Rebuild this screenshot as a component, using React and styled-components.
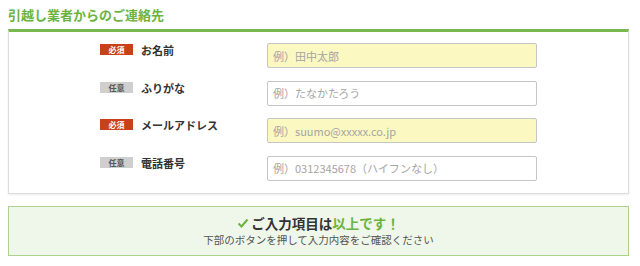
import React from "react";
import styled, { createGlobalStyle } from "styled-components";

const GlobalStyle = createGlobalStyle`
  body {
    margin: 0;
    background: #fff;
    font-family: "Noto Sans CJK JP", "Noto Sans", sans-serif;
    color: #333;
  }
`;

const Page = styled.div`
  padding: 6px 11px 0 8px;
`;

const Title = styled.h2`
  margin: 0 0 5px;
  font-size: 13px;
  line-height: 18px;
  font-weight: 700;
  color: #6cb33e;
`;

const FormBox = styled.div`
  border: 1px solid #ddd;
  border-top: 3px solid #79b74f;
  box-shadow: 0 1px 2px rgba(0, 0, 0, 0.08);
  padding: 11px 0 12px 91px;
  display: flex;
  flex-direction: column;
  gap: 12.5px;
`;

const Row = styled.div`
  display: flex;
  align-items: flex-start;
  height: 25px;
`;

const Badge = styled.span`
  width: 33px;
  height: 11px;
  margin-top: 1px;
  display: flex;
  align-items: center;
  justify-content: center;
  font-size: 8px;
  line-height: 11px;
  font-weight: 700;
  color: ${(p) => (p.required ? "#fff" : "#555")};
  background: ${(p) => (p.required ? "#c9411b" : "#cfcfcf")};
`;

const Label = styled.span`
  width: 126px;
  padding-left: 8px;
  font-size: 11px;
  font-weight: 700;
  line-height: 14px;
  color: #333;
`;

const Input = styled.input`
  box-sizing: border-box;
  width: 270px;
  height: 25px;
  padding: 0 5px;
  border: 1px solid #c6c6c6;
  border-radius: 2px;
  background: ${(p) => (p.required ? "#fcf8c1" : "#fff")};
  font-family: "Noto Sans CJK JP", "Noto Sans", sans-serif;
  font-size: 11px;
  color: #333;
  outline: none;
  &::placeholder {
    color: #a5a5a5;
  }
`;

const Done = styled.div`
  margin-top: 12px;
  height: 50px;
  box-sizing: border-box;
  border: 1px solid #acd28e;
  background: #eff7ea;
  display: flex;
  flex-direction: column;
  align-items: center;
  justify-content: center;
`;

const Headline = styled.div`
  display: flex;
  align-items: center;
  gap: 2px;
  font-size: 13.5px;
  font-weight: 700;
  line-height: 18px;
  color: #333;
`;

const Accent = styled.span`
  color: #6cb33e;
`;

const Sub = styled.div`
  font-size: 10.5px;
  line-height: 15px;
  color: #555;
`;

const fields = [
  { label: "お名前", placeholder: "例）田中太郎", required: true },
  { label: "ふりがな", placeholder: "例）たなかたろう", required: false },
  { label: "メールアドレス", placeholder: "例）suumo@xxxxx.co.jp", required: true },
  { label: "電話番号", placeholder: "例）0312345678（ハイフンなし）", required: false },
];

function CheckMark() {
  return (
    <svg width="12" height="12" viewBox="0 0 12 12">
      <polyline
        points="1.5,6.5 4.5,9.5 10.5,2.5"
        fill="none"
        stroke="#6cb33e"
        strokeWidth="2"
      />
    </svg>
  );
}

export default function App() {
  return (
    <Page>
      <GlobalStyle />
      <Title>引越し業者からのご連絡先</Title>
      <FormBox>
        {fields.map((f) => (
          <Row key={f.label}>
            <Badge required={f.required}>{f.required ? "必須" : "任意"}</Badge>
            <Label>{f.label}</Label>
            <Input required={f.required} placeholder={f.placeholder} />
          </Row>
        ))}
      </FormBox>
      <Done>
        <Headline>
          <CheckMark />
          <span>
            ご入力項目は<Accent>以上です！</Accent>
          </span>
        </Headline>
        <Sub>下部のボタンを押して入力内容をご確認ください</Sub>
      </Done>
    </Page>
  );
}
